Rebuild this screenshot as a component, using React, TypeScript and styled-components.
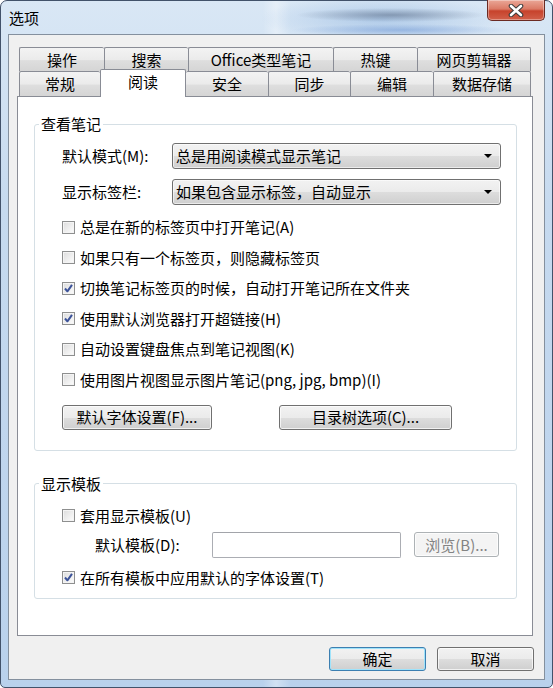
import React from "react";
import styled, { createGlobalStyle } from "styled-components";

const GlobalStyle = createGlobalStyle`
  html, body {
    margin: 0;
    padding: 0;
  }
  body {
    width: 553px;
    height: 688px;
    overflow: hidden;
    font-family: "Noto Sans CJK SC", "Noto Sans", sans-serif;
    font-size: 15px;
    color: #000;
  }
`;

const Frame = styled.div`
  width: 553px;
  height: 688px;
  box-sizing: border-box;
  border: 1px solid #42526a;
  border-radius: 7px 7px 5px 5px;
  padding: 0 7px 7px 7px;
  display: flex;
  flex-direction: column;
  background:
    radial-gradient(ellipse 95px 7px at 390px 14px, rgba(70, 86, 112, 0.45), transparent),
    radial-gradient(ellipse 110px 6px at 400px 29px, rgba(70, 120, 200, 0.35), transparent),
    radial-gradient(ellipse 120px 24px at 380px 18px, rgba(150, 185, 225, 0.6), transparent),
    linear-gradient(90deg, transparent 0, transparent 262px, rgba(255, 255, 255, 0.35) 275px, transparent 290px),
    linear-gradient(180deg, #d9e7f5 0%, #c6daef 30%, #b9d1ec 100%);
`;

const TitleBar = styled.div`
  height: 33px;
  display: flex;
  align-items: flex-start;
  justify-content: space-between;
`;

const Title = styled.span`
  margin-top: 7px;
  padding-left: 1px;
  font-size: 15px;
  line-height: 20px;
  color: #000;
`;

const CloseButton = styled.div`
  width: 58px;
  height: 21px;
  box-sizing: border-box;
  margin-top: -1px;
  border: 1px solid #6b2a22;
  border-top: none;
  border-radius: 0 0 5px 5px;
  background: linear-gradient(180deg, #eaa797 0%, #db7a66 45%, #c7432c 55%, #d1604a 100%);
  box-shadow: inset 0 0 0 1px rgba(255, 255, 255, 0.35);
  display: flex;
  align-items: center;
  justify-content: center;
`;

const Client = styled.div`
  flex: 1;
  background: #f0f0f0;
  border: 1px solid #84909e;
  padding: 12px 11px 0 8px;
  display: flex;
  flex-direction: column;
`;

const TabStrip = styled.div`
  padding: 0 2px;
  display: flex;
  flex-direction: column;
`;

const TabRow = styled.div<{ $h: number }>`
  height: ${(p) => p.$h}px;
  display: flex;
`;

const Tab = styled.div<{ $w: number; $active?: boolean }>`
  width: ${(p) => p.$w}px;
  box-sizing: border-box;
  border: 1px solid #898c95;
  border-bottom: none;
  border-right-width: 0;
  border-radius: 2px 2px 0 0;
  background: linear-gradient(180deg, #f3f3f3 0%, #ebebeb 50%, #dedede 55%, #d5d5d5 100%);
  display: flex;
  align-items: center;
  justify-content: center;
  line-height: 20px;
  white-space: nowrap;
  &:last-child {
    border-right-width: 1px;
  }
  ${(p) =>
    p.$active &&
    `
    position: relative;
    z-index: 1;
    height: 28px;
    margin-top: -2px;
    background: #fff;
    border-right-width: 1px;
    padding-bottom: 4px;
    & + div { border-left-width: 0; }
  `}
`;

const Panel = styled.div`
  height: 540px;
  box-sizing: border-box;
  background: #fff;
  border: 1px solid #898c95;
  padding: 0 15px 0 16px;
  display: flex;
  flex-direction: column;
`;

const Group = styled.fieldset<{ $top: number }>`
  margin: ${(p) => p.$top}px 0 0 0;
  padding: 0 0 0 4px;
  border: 1px solid #d5dfe5;
  border-radius: 3px;
  min-width: 0;
`;

const Legend = styled.legend`
  padding: 0 2px;
  line-height: 18px;
  font-size: 15px;
`;

const GroupBody = styled.div<{ $pt: number; $pb: number }>`
  padding: ${(p) => p.$pt}px 15px ${(p) => p.$pb}px 23px;
  display: flex;
  flex-direction: column;
`;

const FieldRow = styled.div<{ $mt?: number; $indent?: number }>`
  height: 26px;
  margin-top: ${(p) => p.$mt ?? 0}px;
  padding-left: ${(p) => p.$indent ?? 0}px;
  display: flex;
  align-items: center;
`;

const FieldLabel = styled.span<{ $w: number }>`
  width: ${(p) => p.$w}px;
  flex-shrink: 0;
  line-height: 20px;
`;

const Combo = styled.div`
  flex: 1;
  height: 26px;
  box-sizing: border-box;
  border: 1px solid #707070;
  border-radius: 3px;
  background: linear-gradient(180deg, #f2f2f2 0%, #ebebeb 50%, #dddddd 51%, #cfcfcf 100%);
  box-shadow: inset 0 0 0 1px rgba(255, 255, 255, 0.6);
  padding: 0 8px 0 3px;
  display: flex;
  align-items: center;
  justify-content: space-between;
  line-height: 20px;
`;

const Arrow = styled.span`
  width: 0;
  height: 0;
  border-left: 4px solid transparent;
  border-right: 4px solid transparent;
  border-top: 4px solid #000;
`;

const CheckList = styled.div`
  margin-top: 12px;
  display: flex;
  flex-direction: column;
  gap: 10.6px;
`;

const CheckRow = styled.label<{ $mt?: number }>`
  height: 20px;
  margin-top: ${(p) => p.$mt ?? 0}px;
  display: flex;
  align-items: center;
  gap: 5px;
  line-height: 20px;
  white-space: nowrap;
`;

const Box = styled.span`
  width: 13px;
  height: 13px;
  box-sizing: border-box;
  flex-shrink: 0;
  border: 1px solid #8e8f8f;
  background: linear-gradient(135deg, #dcdcdc 0%, #f0f0f0 60%, #fdfdfd 100%);
  box-shadow: inset 0 0 0 1px #f4f4f4;
  display: flex;
  align-items: center;
  justify-content: center;
`;

const ButtonRow = styled.div`
  margin-top: 15px;
  display: flex;
  gap: 67px;
`;

const Button = styled.div<{ $w: number; $h?: number; $default?: boolean; $disabled?: boolean }>`
  width: ${(p) => p.$w}px;
  height: ${(p) => p.$h ?? 25}px;
  box-sizing: border-box;
  border: 1px solid ${(p) => (p.$default ? "#3c7fb1" : p.$disabled ? "#adb2b5" : "#707070")};
  border-radius: 3px;
  background: ${(p) =>
    p.$disabled
      ? "#f4f4f4"
      : "linear-gradient(180deg, #f2f2f2 0%, #ebebeb 50%, #dddddd 51%, #cfcfcf 100%)"};
  box-shadow: inset 0 0 0 1px ${(p) => (p.$default ? "#9fe3fb" : "rgba(255,255,255,0.7)")};
  color: ${(p) => (p.$disabled ? "#838383" : "#000")};
  display: flex;
  align-items: center;
  justify-content: center;
  line-height: 20px;
  white-space: nowrap;
`;

const TextBox = styled.div`
  width: 189px;
  height: 26px;
  box-sizing: border-box;
  border: 1px solid #abadb3;
  border-top-color: #a2a4aa;
  border-radius: 2px;
  background: #fff;
  margin-right: 13px;
`;

const Footer = styled.div`
  margin-top: 11px;
  margin-right: -1px;
  display: flex;
  justify-content: flex-end;
  gap: 11px;
`;

const Check: React.FC<{ checked?: boolean }> = ({ checked }) => (
  <Box>
    {checked && (
      <svg width="11" height="11" viewBox="0 0 11 11">
        <path d="M2 5.5 L4.4 8.3 L9 1.8" fill="none" stroke="#3c5399" strokeWidth="2" strokeLinejoin="round" />
      </svg>
    )}
  </Box>
);

const rowOne = [
  { label: "操作", w: 85 },
  { label: "搜索", w: 84 },
  { label: "Office类型笔记", w: 145 },
  { label: "热键", w: 84 },
  { label: "网页剪辑器", w: 114 },
];

const rowTwo = [
  { label: "常规", w: 81 },
  { label: "阅读", w: 86, active: true },
  { label: "安全", w: 82 },
  { label: "同步", w: 82 },
  { label: "编辑", w: 83 },
  { label: "数据存储", w: 98 },
];

const options = [
  { text: "总是在新的标签页中打开笔记(A)", checked: false },
  { text: "如果只有一个标签页，则隐藏标签页", checked: false },
  { text: "切换笔记标签页的时候，自动打开笔记所在文件夹", checked: true },
  { text: "使用默认浏览器打开超链接(H)", checked: true },
  { text: "自动设置键盘焦点到笔记视图(K)", checked: false },
  { text: "使用图片视图显示图片笔记(png, jpg, bmp)(I)", checked: false },
];

export default function App() {
  return (
    <>
      <GlobalStyle />
      <Frame>
        <TitleBar>
          <Title>选项</Title>
          <CloseButton>
            <svg width="18" height="13" viewBox="0 0 18 13">
              <path d="M4 2 L14 11 M14 2 L4 11" stroke="#3a3a3a" strokeWidth="4.6" strokeLinecap="round" />
              <path d="M4 2 L14 11 M14 2 L4 11" stroke="#fff" strokeWidth="2.6" strokeLinecap="round" />
            </svg>
          </CloseButton>
        </TitleBar>
        <Client>
          <TabStrip>
            <TabRow $h={24}>
              {rowOne.map((t) => (
                <Tab key={t.label} $w={t.w}>
                  {t.label}
                </Tab>
              ))}
            </TabRow>
            <TabRow $h={25}>
              {rowTwo.map((t) => (
                <Tab key={t.label} $w={t.w} $active={t.active}>
                  {t.label}
                </Tab>
              ))}
            </TabRow>
          </TabStrip>
          <Panel>
            <Group $top={18}>
              <Legend>查看笔记</Legend>
              <GroupBody $pt={10} $pb={20}>
                <FieldRow>
                  <FieldLabel $w={110}>默认模式(M):</FieldLabel>
                  <Combo>
                    <span>总是用阅读模式显示笔记</span>
                    <Arrow />
                  </Combo>
                </FieldRow>
                <FieldRow $mt={10}>
                  <FieldLabel $w={110}>显示标签栏:</FieldLabel>
                  <Combo>
                    <span>如果包含显示标签，自动显示</span>
                    <Arrow />
                  </Combo>
                </FieldRow>
                <CheckList>
                  {options.map((o) => (
                    <CheckRow key={o.text}>
                      <Check checked={o.checked} />
                      {o.text}
                    </CheckRow>
                  ))}
                </CheckList>
                <ButtonRow>
                  <Button $w={150}>默认字体设置(F)...</Button>
                  <Button $w={173}>目录树选项(C)...</Button>
                </ButtonRow>
              </GroupBody>
            </Group>
            <Group $top={24}>
              <Legend>显示模板</Legend>
              <GroupBody $pt={13} $pb={10}>
                <CheckRow>
                  <Check />
                  套用显示模板(U)
                </CheckRow>
                <FieldRow $mt={6} $indent={33}>
                  <FieldLabel $w={117}>默认模板(D):</FieldLabel>
                  <TextBox />
                  <Button $w={85} $disabled>
                    浏览(B)...
                  </Button>
                </FieldRow>
                <CheckRow $mt={10}>
                  <Check checked />
                  在所有模板中应用默认的字体设置(T)
                </CheckRow>
              </GroupBody>
            </Group>
          </Panel>
          <Footer>
            <Button $w={97} $h={24} $default>
              确定
            </Button>
            <Button $w={97} $h={24}>
              取消
            </Button>
          </Footer>
        </Client>
      </Frame>
    </>
  );
}
